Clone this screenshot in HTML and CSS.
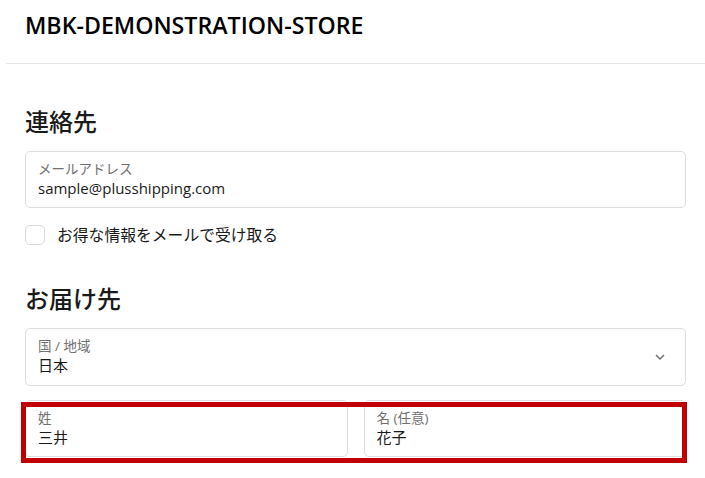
FILE: index.html
```html
<!DOCTYPE html>
<html lang="ja">
<head>
    <meta charset="UTF-8">
    <meta name="viewport" content="width=device-width, initial-scale=1.0">
    <title>チェックアウト - MBK-DEMONSTRATION-STORE</title>
    <link rel="stylesheet" href="styles.css">
</head>
<body>
    <header class="site-header">
        <h1 class="store-name">MBK-DEMONSTRATION-STORE</h1>
    </header>

    <main class="checkout">
        <section class="section">
            <h2>連絡先</h2>
            <div class="field">
                <span class="field-label">メールアドレス</span>
                <span class="field-value">sample@plusshipping.com</span>
            </div>
            <label class="check-row">
                <span class="check-box"></span>
                <span>お得な情報をメールで受け取る</span>
            </label>
        </section>

        <section class="section">
            <h2>お届け先</h2>
            <div class="field field-select">
                <div class="field-text">
                    <span class="field-label">国 / 地域</span>
                    <span class="field-value">日本</span>
                </div>
                <svg class="chevron" width="10" height="6" viewBox="0 0 10 6">
                    <path d="M1 1l4 4 4-4" fill="none" stroke="#6b6b6b" stroke-width="1.4"/>
                </svg>
            </div>
            <div class="name-wrap">
                <div class="name-row">
                    <div class="field">
                        <span class="field-label">姓</span>
                        <span class="field-value">三井</span>
                    </div>
                    <div class="field">
                        <span class="field-label">名 (任意)</span>
                        <span class="field-value">花子</span>
                    </div>
                </div>
                <div class="highlight"></div>
            </div>
        </section>
    </main>
</body>
</html>
```

FILE: styles.css
```css
* {
    margin: 0;
    padding: 0;
    box-sizing: border-box;
}

body {
    background: #fff;
    color: #1a1a1a;
    font-family: "Open Sans", "Noto Sans CJK JP", sans-serif;
}

.site-header {
    margin-left: 6px;
    height: 64px;
    padding: 9px 0 0 19px;
    border-bottom: 1px solid #e6e6e6;
}

.store-name {
    font-size: 23.2px;
    font-weight: 600;
    color: #000;
    line-height: 32px;
}

.checkout {
    padding: 0 19px 20px 25px;
}

.section h2 {
    font-size: 24px;
    font-weight: 500;
    line-height: 31px;
    margin-top: 42px;
    margin-bottom: 14px;
}

.section + .section h2 {
    margin-top: 38px;
}

.field {
    display: flex;
    flex-direction: column;
    justify-content: center;
    height: 57px;
    border: 1px solid #dedede;
    border-radius: 5px;
    padding: 0 12px 1px;
    background: #fff;
}

.field-label {
    font-size: 13.5px;
    line-height: 17px;
    color: #707070;
}

.field-value {
    font-size: 15px;
    line-height: 20px;
    color: #1a1a1a;
}

.field-select {
    flex-direction: row;
    align-items: center;
    justify-content: space-between;
    height: 58px;
    padding-right: 20px;
}

.field-text {
    display: flex;
    flex-direction: column;
}

.check-row {
    display: flex;
    align-items: center;
    gap: 12px;
    margin-top: 17px;
    font-size: 15.8px;
    line-height: 20px;
}

.check-box {
    width: 20px;
    height: 20px;
    border: 1px solid #d9d9d9;
    border-radius: 5px;
}

.name-wrap {
    position: relative;
    margin-top: 14px;
}

.name-row {
    display: grid;
    grid-template-columns: 1fr 1fr;
    gap: 16px;
}

/* annotation frame drawn over the name fields */
.highlight {
    position: absolute;
    top: 2px;
    left: -4px;
    right: -1px;
    bottom: -6px;
    border: 5px solid #c00000;
}
```
